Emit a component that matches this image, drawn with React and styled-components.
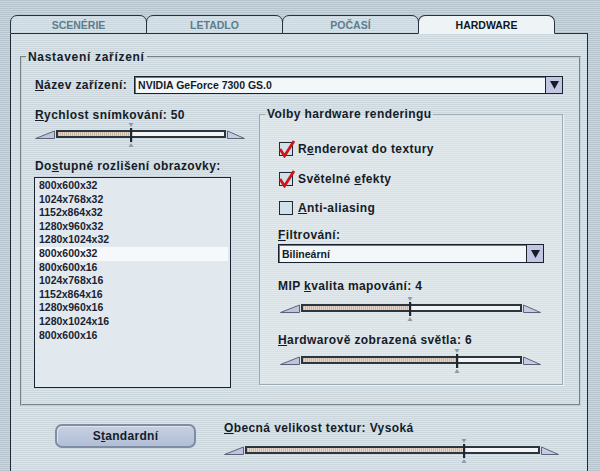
import React from "react";
import styled, { createGlobalStyle } from "styled-components";

const Global = createGlobalStyle`
  html, body { margin: 0; padding: 0; }
  body { font-family: "Liberation Sans", Arial, sans-serif; color: #121a26; }
`;

const ink = "#141c28";

const Screen = styled.div`
  width: 600px;
  height: 471px;
  overflow: hidden;
  box-sizing: border-box;
  padding: 15px 0 0 10px;
  background: repeating-linear-gradient(to bottom, #b6c4ce 0 1px, #cbd6dd 1px 2px);
`;

const TabRow = styled.div`
  display: flex;
  width: 578px;
  height: 19px;
`;

const Tab = styled.div`
  position: relative;
  z-index: ${(p) => (p.$active ? 2 : 1)};
  flex: 0 0 137px;
  box-sizing: border-box;
  margin-left: ${(p) => (p.$first ? "0" : "-1px")};
  border: 1px solid #26323e;
  border-bottom: ${(p) => (p.$active ? "1px solid transparent" : "1px solid #26323e")};
  border-radius: 7px 7px 0 0;
  background: ${(p) =>
    p.$active
      ? "#eef3f6"
      : "repeating-linear-gradient(to bottom, #cbd7de 0 1px, #d9e2e7 1px 2px)"};
  color: ${(p) => (p.$active ? "#101820" : "#5c7d8d")};
  font-size: 10.5px;
  font-weight: bold;
  display: flex;
  align-items: center;
  justify-content: center;
  padding-top: 1px;
`;

const TabFill = styled.div`
  flex: 1;
  border-bottom: 1px solid #26323e;
`;

const Panel = styled.div`
  width: 578px;
  height: 460px;
  box-sizing: border-box;
  border: 1px solid #1e2934;
  border-top: none;
  background: repeating-linear-gradient(to bottom, #ccd7dd 0 1px, #dce4e8 1px 2px);
  padding: 16px 6px 0 9px;
`;

const Group = styled.fieldset`
  margin: 0;
  min-width: 0;
  box-sizing: border-box;
  border: 2px groove #c2d0d8;
  padding: ${(p) => p.$pad};
`;

const Legend = styled.legend`
  font-size: 12px;
  font-weight: bold;
  letter-spacing: ${(p) => p.$ls || "0.4px"};
  line-height: 14px;
  padding: 0 2px;
  margin-left: ${(p) => p.$shift};
  color: ${ink};
`;

const InnerGroup = styled.fieldset`
  margin: 0;
  min-width: 0;
  box-sizing: border-box;
  border: 1px solid #9aabb5;
  box-shadow: 1px 1px 0 #eef3f5;
  background: repeating-linear-gradient(to bottom, #d6e0e5 0 1px, #e3eaee 1px 2px);
  padding: 20px 18px 14px 18px;
  display: flex;
  flex-direction: column;
`;

const Label = styled.div`
  font-size: 12px;
  font-weight: bold;
  letter-spacing: 0.4px;
  line-height: 14px;
  color: ${ink};
  white-space: nowrap;
  margin-top: ${(p) => p.$mt || "0"};
`;

const Key = styled.span`
  text-decoration: underline;
  text-underline-offset: 1px;
`;

const DeviceRow = styled.div`
  display: flex;
  align-items: center;
  gap: 7px;
`;

const Select = styled.div`
  flex: ${(p) => (p.$grow ? "1" : "none")};
  display: flex;
  height: ${(p) => p.$h};
  box-sizing: border-box;
  border: 1px solid #18222e;
  box-shadow: inset 1px 1px 0 #6c7884;
  background: #f3f7f9;
  margin-top: ${(p) => p.$mt || "0"};
`;

const SelectText = styled.div`
  flex: 1;
  font-size: 10.5px;
  font-weight: bold;
  color: ${ink};
  display: flex;
  align-items: center;
  padding-left: 3px;
`;

const SelectButton = styled.div`
  width: 16px;
  border-left: 1px solid #18222e;
  background: #c3c6e0;
  display: flex;
  align-items: center;
  justify-content: center;
`;

const Columns = styled.div`
  display: grid;
  grid-template-columns: 210px 1fr;
  column-gap: 14px;
  margin-top: 13px;
  align-items: start;
`;

const LeftCol = styled.div`
  display: flex;
  flex-direction: column;
  padding-top: 1px;
`;

const ListBox = styled.div`
  width: 197px;
  height: 211px;
  box-sizing: border-box;
  border: 1px solid #1a2430;
  background: #e1e9ef;
  padding: 1px 2px 0 1px;
  margin-top: 4px;
  margin-left: -1px;
`;

const ListItem = styled.div`
  height: 13.6px;
  line-height: 13.6px;
  font-size: 10.5px;
  font-weight: bold;
  color: #1a2232;
  padding-left: 3px;
  background: ${(p) => (p.$selected ? "#f6f8fa" : "transparent")};
`;

const CheckRow = styled.div`
  display: flex;
  align-items: center;
  gap: 5px;
  height: 16px;
  margin-top: ${(p) => p.$mt || "0"};
  margin-left: 1px;
`;

const Box = styled.div`
  position: relative;
  width: 14px;
  height: 14px;
  box-sizing: border-box;
  border: 1px solid #1d2a3a;
  background: #d2e0ea;
  flex: 0 0 auto;
`;

const CheckMark = styled.svg`
  position: absolute;
  left: -2px;
  top: -3px;
`;

const SliderWrap = styled.div`
  display: flex;
  align-items: center;
  gap: 1px;
  height: 20px;
  width: ${(p) => p.$w};
  margin-top: ${(p) => p.$mt || "0"};
  margin-left: ${(p) => p.$ml || "0"};
`;

const Track = styled.div`
  position: relative;
  flex: 1;
  height: 8px;
  box-sizing: border-box;
  border: 2px solid #2c343e;
  background: #f1f3f5;
`;

const Fill = styled.div`
  height: 100%;
  background: repeating-linear-gradient(90deg, #c9b6a4 0 1px, #e3d5c7 1px 2px);
`;

const Thumb = styled.svg`
  position: absolute;
  top: -9px;
  margin-left: -4px;
`;

const BottomRow = styled.div`
  display: flex;
  align-items: flex-start;
  margin-top: 15px;
  padding-left: 35px;
  gap: 28px;
`;

const Button = styled.div`
  margin-top: 3px;
  width: 141px;
  height: 24px;
  box-sizing: border-box;
  border: 2px solid #7e8ca4;
  border-radius: 7px;
  background: linear-gradient(#c6d0e2, #b2bed6);
  box-shadow: inset 1px 1px 0 #dfe5ef;
  display: flex;
  align-items: center;
  justify-content: center;
  font-size: 12px;
  font-weight: bold;
  letter-spacing: 0.3px;
  color: ${ink};
`;

const BottomRight = styled.div`
  display: flex;
  flex-direction: column;
`;

const Arrow = () => (
  <svg width="9" height="8" viewBox="0 0 9 8">
    <path d="M0 0 H9 L4.5 8 Z" fill="#141c2a" />
  </svg>
);

const LeftWedge = () => (
  <svg width="20" height="10" viewBox="0 0 20 10">
    <path d="M0.5 9.5 L19.5 2 V9.5 Z" fill="#c0c3dc" stroke="#5a6478" strokeWidth="1" />
  </svg>
);

const RightWedge = () => (
  <svg width="18" height="10" viewBox="0 0 18 10">
    <path d="M0.5 2 L17.5 9.5 H0.5 Z" fill="#c8cbe2" stroke="#5a6478" strokeWidth="1" />
  </svg>
);

const Slider = ({ w, value, mt, ml }) => (
  <SliderWrap $w={w} $mt={mt} $ml={ml}>
    <LeftWedge />
    <Track>
      <Fill style={{ width: `${value * 100}%` }} />
      <Thumb width="8" height="24" viewBox="0 0 8 24" style={{ left: `${value * 100}%` }}>
        <path d="M1.5 0 H6.5 L4 4 Z" fill="#8c9aab" />
        <rect x="3" y="5" width="2.2" height="14" fill="#1e2630" />
        <path d="M1.5 24 H6.5 L4 20 Z" fill="#8c9aab" />
      </Thumb>
    </Track>
    <RightWedge />
  </SliderWrap>
);

const Check = ({ checked, children, mt }) => (
  <CheckRow $mt={mt}>
    <Box>
      {checked && (
        <CheckMark width="18" height="18" viewBox="0 0 18 18">
          <path d="M2 9 L6.5 16 L16 1" fill="none" stroke="#d0141a" strokeWidth="2.8" strokeLinejoin="miter" />
        </CheckMark>
      )}
    </Box>
    <Label>{children}</Label>
  </CheckRow>
);

const resolutions = [
  "800x600x32",
  "1024x768x32",
  "1152x864x32",
  "1280x960x32",
  "1280x1024x32",
  "800x600x32",
  "800x600x16",
  "1024x768x16",
  "1152x864x16",
  "1280x960x16",
  "1280x1024x16",
  "800x600x16",
];

const tabs = ["SCENÉRIE", "LETADLO", "POČASÍ", "HARDWARE"];

export default function App() {
  return (
    <>
      <Global />
      <Screen>
        <TabRow>
          {tabs.map((t, i) => (
            <Tab key={t} $first={i === 0} $active={i === 3}>
              {t}
            </Tab>
          ))}
          <TabFill />
        </TabRow>
        <Panel>
          <Group $pad="12px 16px 16px 13px">
            <Legend $shift="-9px" $ls="0.7px">Nastavení zařízení</Legend>
            <DeviceRow>
              <Label>
                <Key>N</Key>ázev zařízení:
              </Label>
              <Select $h="18px" $grow>
                <SelectText>NVIDIA GeForce 7300 GS.0</SelectText>
                <SelectButton>
                  <Arrow />
                </SelectButton>
              </Select>
            </DeviceRow>
            <Columns>
              <LeftCol>
                <Label>
                  <Key>R</Key>ychlost snímkování: 50
                </Label>
                <Slider w="210px" value={0.44} mt="2px" />
                <Label $mt="15px">
                  Do<Key>s</Key>tupné rozlišení obrazovky:
                </Label>
                <ListBox>
                  {resolutions.map((r, i) => (
                    <ListItem key={i} $selected={i === 5}>
                      {r}
                    </ListItem>
                  ))}
                </ListBox>
              </LeftCol>
              <InnerGroup>
                <Legend $shift="-13px">Volby hardware renderingu</Legend>
                <Check checked>
                  R<Key>e</Key>nderovat do textury
                </Check>
                <Check checked mt="14px">
                  Světelné <Key>e</Key>fekty
                </Check>
                <Check mt="13px">
                  <Key>A</Key>nti-aliasing
                </Check>
                <Label $mt="12px">
                  <Key>F</Key>iltrování:
                </Label>
                <Select $h="19px" $mt="2px">
                  <SelectText>Bilineární</SelectText>
                  <SelectButton>
                    <Arrow />
                  </SelectButton>
                </Select>
                <Label $mt="16px">
                  MIP <Key>k</Key>valita mapování: 4
                </Label>
                <Slider w="261px" value={0.495} mt="5px" ml="2px" />
                <Label $mt="15px">
                  <Key>H</Key>ardwarově zobrazená světla: 6
                </Label>
                <Slider w="261px" value={0.71} mt="3px" ml="2px" />
              </InnerGroup>
            </Columns>
          </Group>
          <BottomRow>
            <Button>
              S<Key>t</Key>andardní
            </Button>
            <BottomRight>
              <Label>
                <Key>O</Key>becná velikost textur: Vysoká
              </Label>
              <Slider w="335px" value={0.746} mt="5px" />
            </BottomRight>
          </BottomRow>
        </Panel>
      </Screen>
    </>
  );
}
